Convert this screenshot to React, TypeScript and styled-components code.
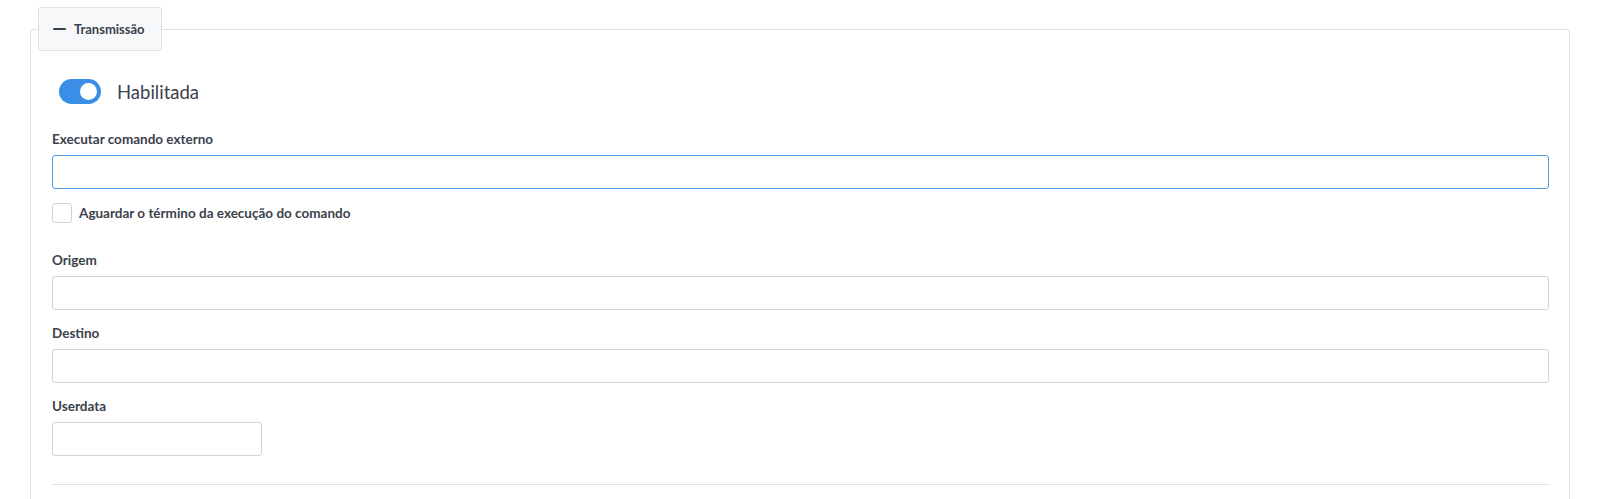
import React from "react";
import styled, { createGlobalStyle } from "styled-components";

const GlobalStyle = createGlobalStyle`
  html, body { margin: 0; padding: 0; background: #ffffff; }
  body { font-family: Lato, "Open Sans", sans-serif; color: #3b414c; }
  * { box-sizing: border-box; }
`;

const Page = styled.div`
  padding: 7px 36px 0 30px;
`;

const Fieldset = styled.fieldset`
  margin: 0;
  padding: 0;
  border: 1px solid #dfe1e5;
  border-bottom: none;
  border-radius: 4px 4px 0 0;
  min-width: 0;
`;

const Legend = styled.legend`
  margin-left: 7px;
  padding: 0 16px 0 14px;
  height: 44px;
  display: flex;
  align-items: center;
  gap: 8px;
  background: #f7f8fa;
  border: 1px solid #dfe1e5;
  border-radius: 3px;
  font-size: 13px;
  font-weight: 700;
  color: #3b414c;
`;

const Dash = styled.span`
  display: inline-block;
  width: 13px;
  height: 2px;
  background: #3b414c;
  border-radius: 1px;
`;

const Body = styled.div`
  padding: 28px 20px 0 21px;
  display: flex;
  flex-direction: column;
`;

const ToggleRow = styled.label`
  display: flex;
  align-items: center;
  gap: 16px;
  margin-left: 7px;
  height: 25px;
  font-size: 18.5px;
  color: #3b414c;
`;

const Switch = styled.span<{ $on: boolean }>`
  width: 42px;
  height: 25px;
  border-radius: 13px;
  background: ${(p) => (p.$on ? "#3a8ee8" : "#cfd4da")};
  display: flex;
  align-items: center;
  justify-content: ${(p) => (p.$on ? "flex-end" : "flex-start")};
  padding: 0 4px;
`;

const Knob = styled.span`
  width: 17px;
  height: 17px;
  border-radius: 50%;
  background: #ffffff;
`;

const Field = styled.div<{ $top: number }>`
  display: flex;
  flex-direction: column;
  gap: 6px;
  margin-top: ${(p) => p.$top}px;
`;

const Label = styled.label`
  font-size: 13.5px;
  line-height: 20px;
  font-weight: 700;
  color: #3b414c;
`;

const Input = styled.input<{ $focus?: boolean; $w?: string }>`
  width: ${(p) => p.$w || "100%"};
  height: 34px;
  border: 1px solid ${(p) => (p.$focus ? "#4d9de9" : "#cfd4da")};
  border-radius: 3px;
  background: #ffffff;
  outline: none;
  font: inherit;
  padding: 0 10px;
`;

const CheckRow = styled.label`
  display: flex;
  align-items: center;
  gap: 7px;
  margin-top: 14px;
  height: 20px;
  font-size: 13.5px;
  font-weight: 700;
  color: #3b414c;
`;

const Box = styled.span`
  width: 20px;
  height: 20px;
  border: 1px solid #cfd4da;
  border-radius: 3px;
  background: #ffffff;
`;

const Divider = styled.hr`
  margin: 28px 0 0 0;
  border: none;
  border-top: 1px solid #dfe1e5;
  height: 0;
`;

const Spacer = styled.div`
  height: 20px;
`;

export default function App() {
  return (
    <>
      <GlobalStyle />
      <Page>
        <Fieldset>
          <Legend>
            <Dash />
            Transmissão
          </Legend>
          <Body>
            <ToggleRow>
              <Switch $on>
                <Knob />
              </Switch>
              Habilitada
            </ToggleRow>
            <Field $top={25}>
              <Label>Executar comando externo</Label>
              <Input $focus />
            </Field>
            <CheckRow>
              <Box />
              Aguardar o término da execução do comando
            </CheckRow>
            <Field $top={27}>
              <Label>Origem</Label>
              <Input />
            </Field>
            <Field $top={13}>
              <Label>Destino</Label>
              <Input />
            </Field>
            <Field $top={13}>
              <Label>Userdata</Label>
              <Input $w="210px" />
            </Field>
            <Divider />
            <Spacer />
          </Body>
        </Fieldset>
      </Page>
    </>
  );
}
